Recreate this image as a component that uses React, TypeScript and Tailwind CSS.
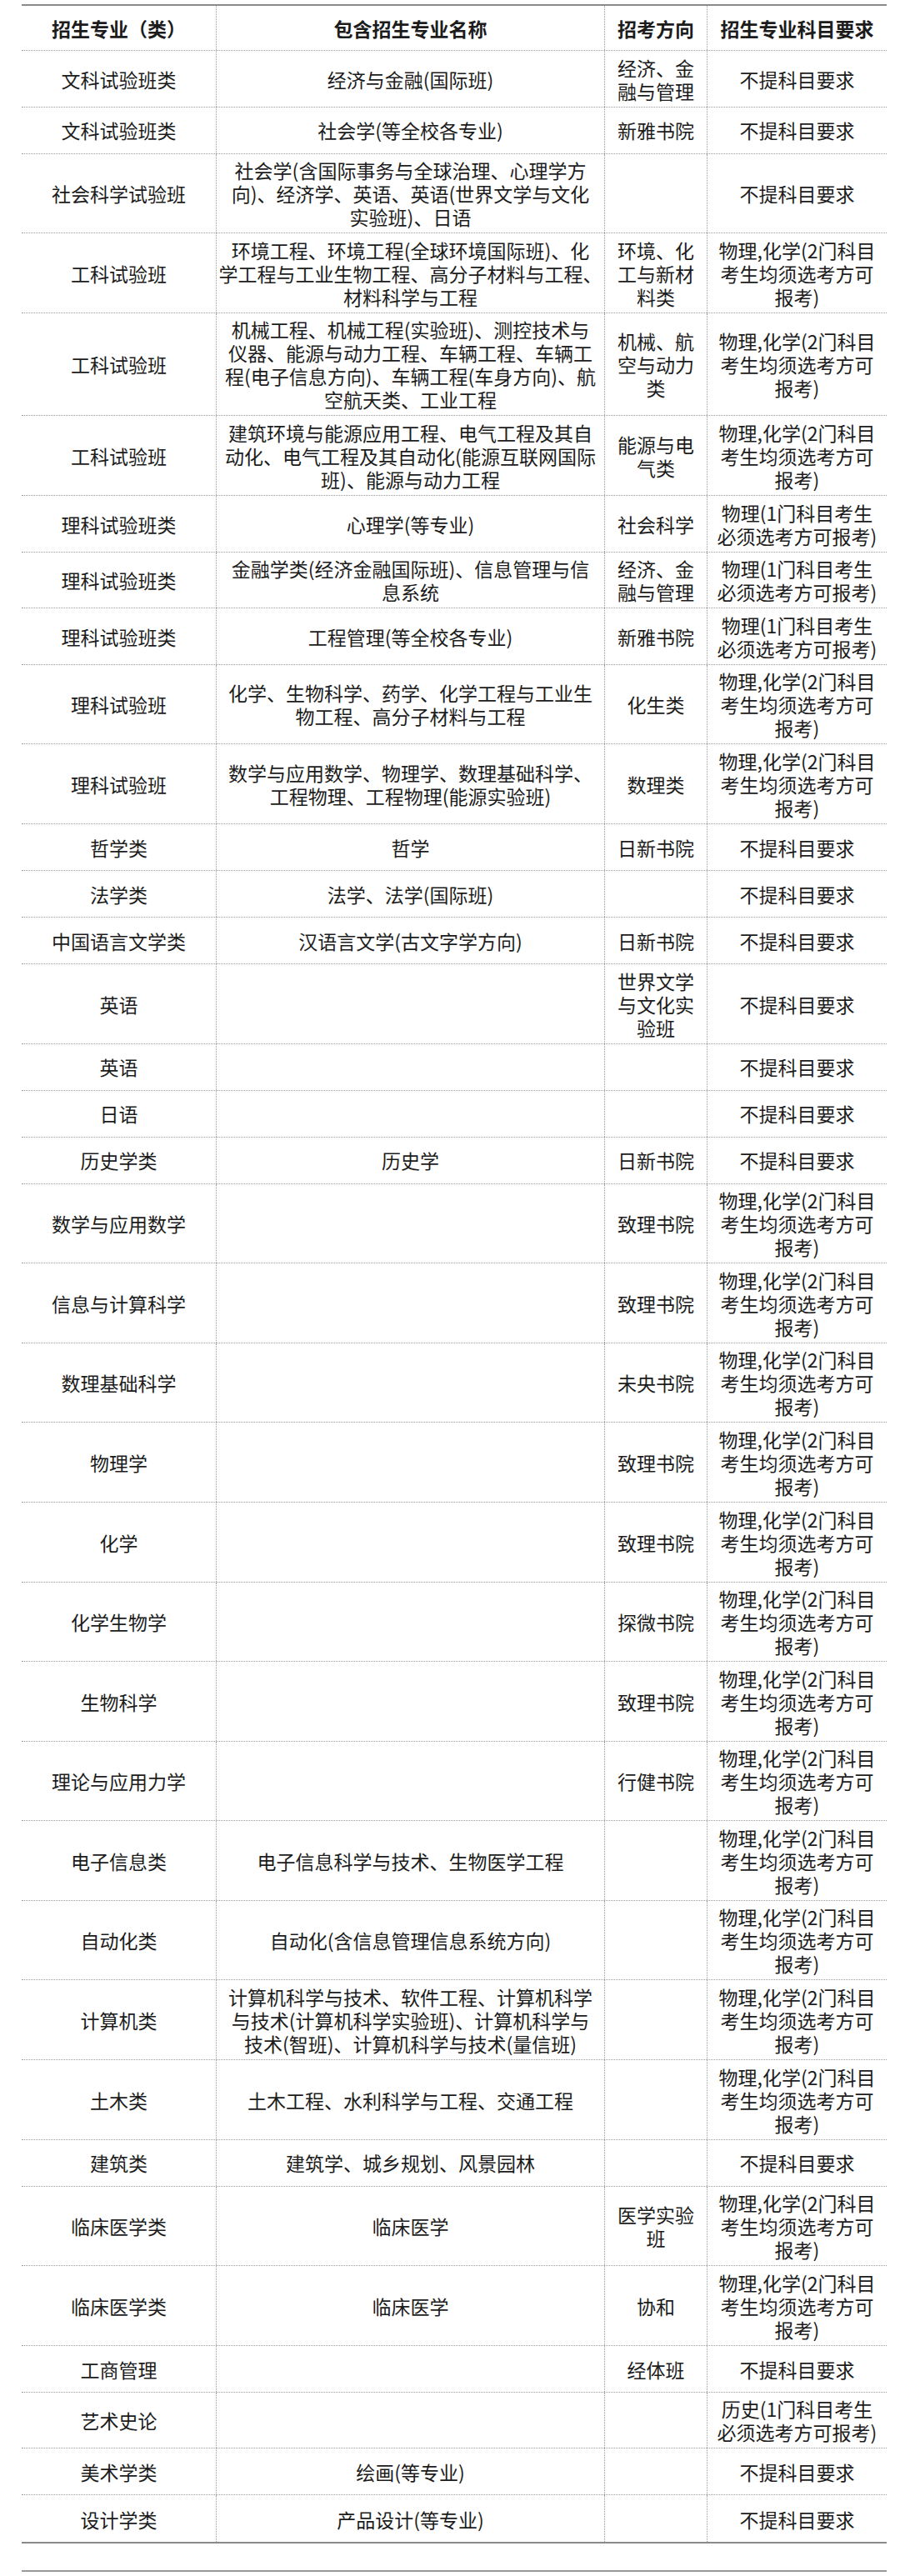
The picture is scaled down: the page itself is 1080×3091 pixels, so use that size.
import React from "react";

const P1 = ["物理(1门科目考生", "必须选考方可报考)"];
const P2 = ["物理,化学(2门科目", "考生均须选考方可", "报考)"];
const N = ["不提科目要求"];

type Row = [string[], string[], string[], string[]];

const rows: Row[] = [
  [["文科试验班类"], ["经济与金融(国际班)"], ["经济、金", "融与管理"], N],
  [["文科试验班类"], ["社会学(等全校各专业)"], ["新雅书院"], N],
  [
    ["社会科学试验班"],
    ["社会学(含国际事务与全球治理、心理学方", "向)、经济学、英语、英语(世界文学与文化", "实验班)、日语"],
    [],
    N,
  ],
  [
    ["工科试验班"],
    ["环境工程、环境工程(全球环境国际班)、化", "学工程与工业生物工程、高分子材料与工程、", "材料科学与工程"],
    ["环境、化", "工与新材", "料类"],
    P2,
  ],
  [
    ["工科试验班"],
    [
      "机械工程、机械工程(实验班)、测控技术与",
      "仪器、能源与动力工程、车辆工程、车辆工",
      "程(电子信息方向)、车辆工程(车身方向)、航",
      "空航天类、工业工程",
    ],
    ["机械、航", "空与动力", "类"],
    P2,
  ],
  [
    ["工科试验班"],
    ["建筑环境与能源应用工程、电气工程及其自", "动化、电气工程及其自动化(能源互联网国际", "班)、能源与动力工程"],
    ["能源与电", "气类"],
    P2,
  ],
  [["理科试验班类"], ["心理学(等专业)"], ["社会科学"], P1],
  [["理科试验班类"], ["金融学类(经济金融国际班)、信息管理与信", "息系统"], ["经济、金", "融与管理"], P1],
  [["理科试验班类"], ["工程管理(等全校各专业)"], ["新雅书院"], P1],
  [["理科试验班"], ["化学、生物科学、药学、化学工程与工业生", "物工程、高分子材料与工程"], ["化生类"], P2],
  [["理科试验班"], ["数学与应用数学、物理学、数理基础科学、", "工程物理、工程物理(能源实验班)"], ["数理类"], P2],
  [["哲学类"], ["哲学"], ["日新书院"], N],
  [["法学类"], ["法学、法学(国际班)"], [], N],
  [["中国语言文学类"], ["汉语言文学(古文字学方向)"], ["日新书院"], N],
  [["英语"], [], ["世界文学", "与文化实", "验班"], N],
  [["英语"], [], [], N],
  [["日语"], [], [], N],
  [["历史学类"], ["历史学"], ["日新书院"], N],
  [["数学与应用数学"], [], ["致理书院"], P2],
  [["信息与计算科学"], [], ["致理书院"], P2],
  [["数理基础科学"], [], ["未央书院"], P2],
  [["物理学"], [], ["致理书院"], P2],
  [["化学"], [], ["致理书院"], P2],
  [["化学生物学"], [], ["探微书院"], P2],
  [["生物科学"], [], ["致理书院"], P2],
  [["理论与应用力学"], [], ["行健书院"], P2],
  [["电子信息类"], ["电子信息科学与技术、生物医学工程"], [], P2],
  [["自动化类"], ["自动化(含信息管理信息系统方向)"], [], P2],
  [
    ["计算机类"],
    ["计算机科学与技术、软件工程、计算机科学", "与技术(计算机科学实验班)、计算机科学与", "技术(智班)、计算机科学与技术(量信班)"],
    [],
    P2,
  ],
  [["土木类"], ["土木工程、水利科学与工程、交通工程"], [], P2],
  [["建筑类"], ["建筑学、城乡规划、风景园林"], [], N],
  [["临床医学类"], ["临床医学"], ["医学实验", "班"], P2],
  [["临床医学类"], ["临床医学"], ["协和"], P2],
  [["工商管理"], [], ["经体班"], N],
  [["艺术史论"], [], [], ["历史(1门科目考生", "必须选考方可报考)"]],
  [["美术学类"], ["绘画(等专业)"], [], N],
  [["设计学类"], ["产品设计(等专业)"], [], N],
];

function Cell({ lines, last, bold }: { lines: string[]; last?: boolean; bold?: boolean }) {
  return (
    <div
      className={
        "flex flex-col items-center justify-center text-center pt-[5.6px] pb-[5px] " +
        (last ? "" : "border-r border-dotted border-[#9a9a9a] ") +
        (bold ? "font-bold" : "")
      }
    >
      {lines.map((l, i) => (
        <span key={i} className="whitespace-nowrap block">
          {l}
        </span>
      ))}
    </div>
  );
}

export default function App() {
  return (
    <div
      className="w-[1080px] min-h-[3091px] bg-white pt-[5px] pl-[26px] text-[#1c1c1c] text-[23px] leading-[28px]"
      style={{ fontFamily: '"Noto Sans CJK SC", "Noto Sans", sans-serif' }}
    >
      <div className="w-[1038px] border-y-2 border-[#8a8a8a]">
        <div className="grid grid-cols-[234px_466px_123px_215px] min-h-[54px] border-b border-dotted border-[#9a9a9a]">
          <Cell lines={["招生专业（类）"]} bold />
          <Cell lines={["包含招生专业名称"]} bold />
          <Cell lines={["招考方向"]} bold />
          <Cell lines={["招生专业科目要求"]} bold last />
        </div>
        {rows.map((r, i) => (
          <div
            key={i}
            className={
              "grid grid-cols-[234px_466px_123px_215px] min-h-[56px] " +
              (i === rows.length - 1 ? "" : "border-b border-dotted border-[#9a9a9a]")
            }
          >
            <Cell lines={r[0]} />
            <Cell lines={r[1]} />
            <Cell lines={r[2]} />
            <Cell lines={r[3]} last />
          </div>
        ))}
      </div>
      <div className="w-[1038px] mt-[32px] h-[2px] bg-[#9a9a9a]" />
    </div>
  );
}
